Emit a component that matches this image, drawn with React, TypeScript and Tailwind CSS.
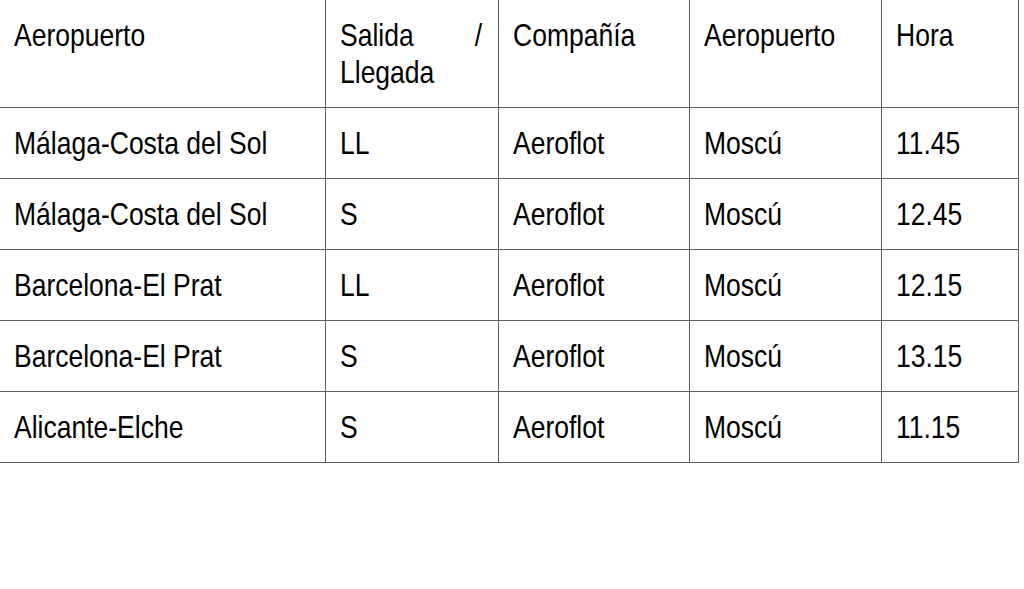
const rows = [
  ['Málaga-Costa del Sol', 'LL', 'Aeroflot', 'Moscú', '11.45'],
  ['Málaga-Costa del Sol', 'S', 'Aeroflot', 'Moscú', '12.45'],
  ['Barcelona-El Prat', 'LL', 'Aeroflot', 'Moscú', '12.15'],
  ['Barcelona-El Prat', 'S', 'Aeroflot', 'Moscú', '13.15'],
  ['Alicante-Elche', 'S', 'Aeroflot', 'Moscú', '11.15'],
];

const cell = 'border-r border-b border-[#5f5f5f] pl-[14px] pr-[16px] pt-[17px] text-black';

// the source text is a little stretched vertically
function Txt({ children, justify }: { children: React.ReactNode; justify?: boolean }) {
  return (
    <div className={`origin-top scale-y-[1.2] leading-[31px] ${justify ? 'text-justify' : ''}`}>
      {children}
    </div>
  );
}

export default function App() {
  return (
    <div className="h-[589px] w-[1024px] overflow-hidden bg-white font-['Liberation_Sans',Arial,sans-serif] text-[26.5px]">
      <div className="grid w-[1019px] grid-cols-[326px_173px_191px_192px_137px]">
        <div className={`${cell} h-[108px]`}><Txt>Aeropuerto</Txt></div>
        <div className={`${cell} h-[108px]`}><Txt justify>Salida / Llegada</Txt></div>
        <div className={`${cell} h-[108px]`}><Txt>Compañía</Txt></div>
        <div className={`${cell} h-[108px]`}><Txt>Aeropuerto</Txt></div>
        <div className={`${cell} h-[108px]`}><Txt>Hora</Txt></div>
        {rows.map((r, i) =>
          r.map((v, j) => (
            <div key={`${i}-${j}`} className={`${cell} h-[71px]`}>
              <Txt>{v}</Txt>
            </div>
          ))
        )}
      </div>
    </div>
  );
}
